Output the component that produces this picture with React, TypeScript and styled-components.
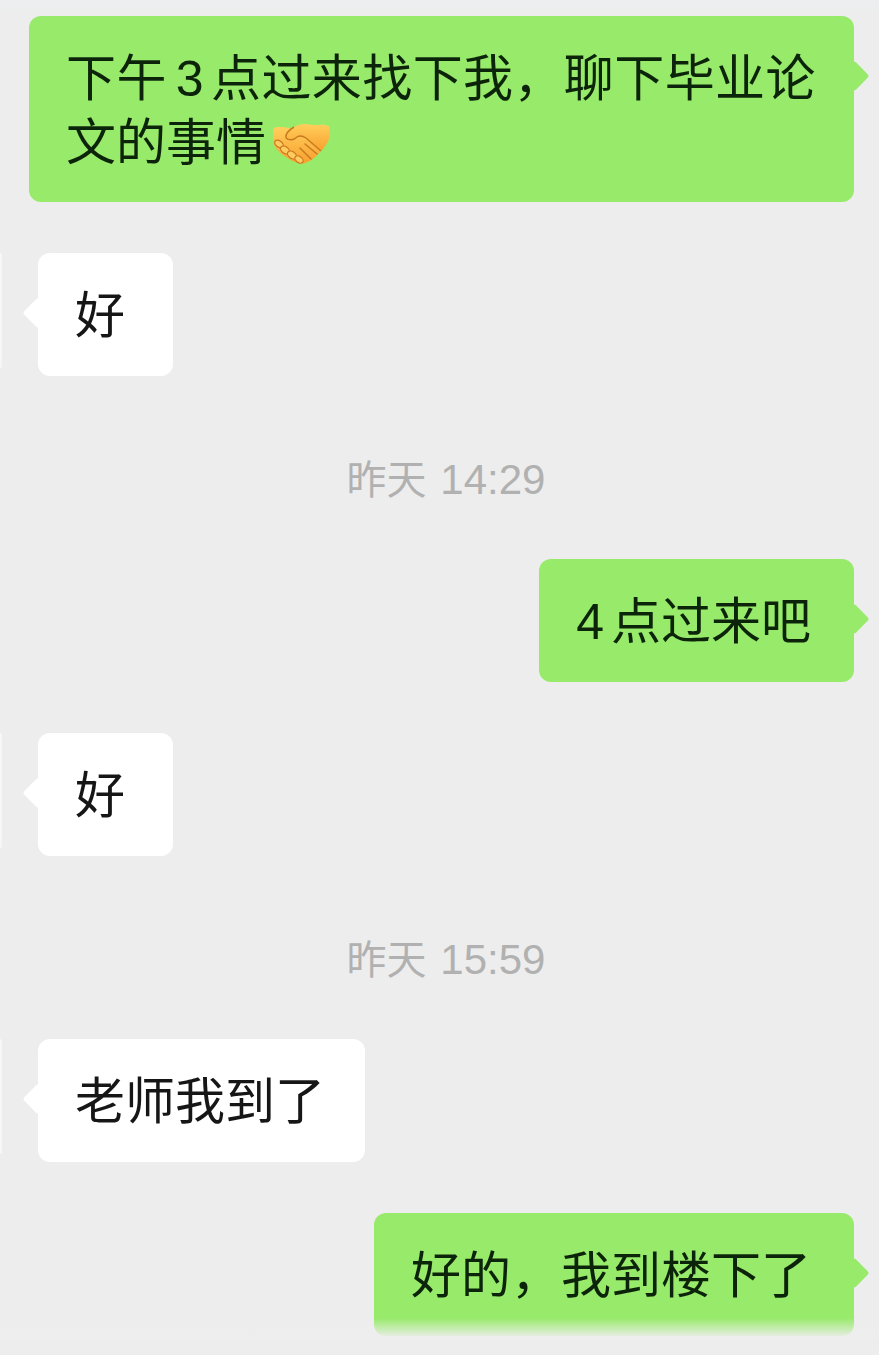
import React from "react";
import styled, { createGlobalStyle } from "styled-components";

const Global = createGlobalStyle`
  html, body { margin: 0; padding: 0; background: #ededed; }
  body { width: 879px; height: 1355px; overflow: hidden; }
`;

const Page = styled.div`
  position: relative;
  box-sizing: border-box;
  width: 879px;
  height: 1355px;
  padding-top: 16px;
  display: flex;
  flex-direction: column;
  gap: 51px;
  overflow: hidden;
  background: linear-gradient(#eceef0 0, #ededed 14px);
  font-family: "Noto Sans CJK SC", "Liberation Sans", sans-serif;
`;

const Row = styled.div<{ $mine?: boolean }>`
  display: flex;
  align-items: flex-start;
  justify-content: ${(p) => (p.$mine ? "flex-end" : "flex-start")};
  padding: ${(p) => (p.$mine ? "0 25px 0 0" : "0")};
`;

const AvatarEdge = styled.div`
  width: 2px;
  height: 115px;
  margin-right: 36px;
  border-radius: 0 3px 3px 0;
  background: #f6f6f6;
`;

const Bubble = styled.div<{ $mine?: boolean; $wide?: boolean }>`
  position: relative;
  box-sizing: border-box;
  min-width: 135px;
  padding: ${(p) => (p.$wide ? "26px 20px 32px 37px" : p.$mine ? "27px 43px 33px 37px" : "27px 40px 33px 37px")};
  width: ${(p) => (p.$wide ? "825px" : "auto")};
  border-radius: 12px;
  background: ${(p) => (p.$mine ? "#98ea6b" : "#ffffff")};
  color: ${(p) => (p.$mine ? "#0c240a" : "#161616")};
  font-size: 50px;
  line-height: ${(p) => (p.$wide ? "64px" : "63px")};
  white-space: pre-wrap;

  &::after {
    content: "";
    position: absolute;
    top: 49px;
    ${(p) => (p.$mine ? "right: -11px;" : "left: -11px;")}
    width: 22px;
    height: 22px;
    border-radius: 3px;
    background: inherit;
    transform: rotate(45deg);
  }
`;

const FirstLine = styled.span`
  letter-spacing: 0.4px;
`;

const Digit = styled.span`
  font-family: "Liberation Sans", sans-serif;
  font-weight: 400;
  line-height: 0;
  margin: 0 7px 0 9px;
`;

const LeadDigit = styled(Digit)`
  margin: 0 7px 0 0;
`;

const Time = styled.div`
  box-sizing: border-box;
  height: 81px;
  padding: 21px 0 0 13px;
  text-align: center;
  font-size: 40px;
  line-height: 58px;
  color: #b1b1b1;
`;

const TimeDigits = styled.span`
  font-family: "Liberation Sans", sans-serif;
  font-size: 42px;
  line-height: 0;
  margin-left: 2px;
`;

const Emoji = styled.svg`
  display: inline-block;
  width: 58px;
  height: 44px;
  margin-left: 6px;
  vertical-align: -5px;
`;

const BottomFade = styled.div`
  position: absolute;
  left: 0;
  right: 0;
  bottom: 17px;
  height: 20px;
  background: linear-gradient(rgba(238, 238, 238, 0), rgba(238, 238, 238, 1));
  pointer-events: none;
`;

const Handshake = () => (
  <Emoji viewBox="0 0 58 44" aria-hidden="true">
    <defs>
      <linearGradient id="hs" x1="0" y1="0" x2="0" y2="1">
        <stop offset="0" stopColor="#ffcf5c" />
        <stop offset="1" stopColor="#f8a02e" />
      </linearGradient>
    </defs>
    <path d="M1 10 C1 7 3 6 6 6 C11 6 15 6 19 8 L34 16 L50 28 C46 34 40 40 33 42 C27 44 20 40 14 36 C7 32 2 26 1 20Z" fill="url(#hs)" />
    <path d="M57 5 C52 3 46 4 40 4 C33 2 27 3 22 6 C17 9 13 13 14 17 C17 20 22 19 25 16 C28 14 31 15 34 17 L49 30 C53 26 57 20 58 14Z" fill="url(#hs)" />
    <path d="M14 17 C17 20 22 19 25 16 C28 14 31 15 34 17 L49 30" fill="none" stroke="#c97a20" strokeWidth="1.5" />
    <path d="M22 6 C17 9 13 13 14 17" fill="none" stroke="#c97a20" strokeWidth="1.5" />
    <path d="M33 23 L45 33 M28 27 L39 38" fill="none" stroke="#c97a20" strokeWidth="1.5" strokeLinecap="round" />
    <g fill="#ffcb5e" stroke="#c97a20" strokeWidth="1.3">
      <ellipse cx="7" cy="23" rx="4.8" ry="3.1" transform="rotate(35 7 23)" />
      <ellipse cx="13" cy="29" rx="5" ry="3.3" transform="rotate(35 13 29)" />
      <ellipse cx="20" cy="34" rx="5" ry="3.3" transform="rotate(35 20 34)" />
      <ellipse cx="27" cy="38.5" rx="4.6" ry="3" transform="rotate(35 27 38.5)" />
    </g>
  </Emoji>
);

export default function App() {
  return (
    <Page>
      <Global />
      <Row $mine>
        <Bubble $mine $wide>
          <FirstLine>
            下午<Digit>3</Digit>点过来找下我，聊下毕业论
          </FirstLine>
          {"\n"}文的事情
          <Handshake />
        </Bubble>
      </Row>
      <Row>
        <AvatarEdge />
        <Bubble>好</Bubble>
      </Row>
      <Time>
        昨天<TimeDigits> 14:29</TimeDigits>
      </Time>
      <Row $mine>
        <Bubble $mine>
          <LeadDigit>4</LeadDigit>点过来吧
        </Bubble>
      </Row>
      <Row>
        <AvatarEdge />
        <Bubble>好</Bubble>
      </Row>
      <Time>
        昨天<TimeDigits> 15:59</TimeDigits>
      </Time>
      <Row>
        <AvatarEdge />
        <Bubble>老师我到了</Bubble>
      </Row>
      <Row $mine>
        <Bubble $mine>好的，我到楼下了</Bubble>
      </Row>
      <BottomFade />
    </Page>
  );
}
